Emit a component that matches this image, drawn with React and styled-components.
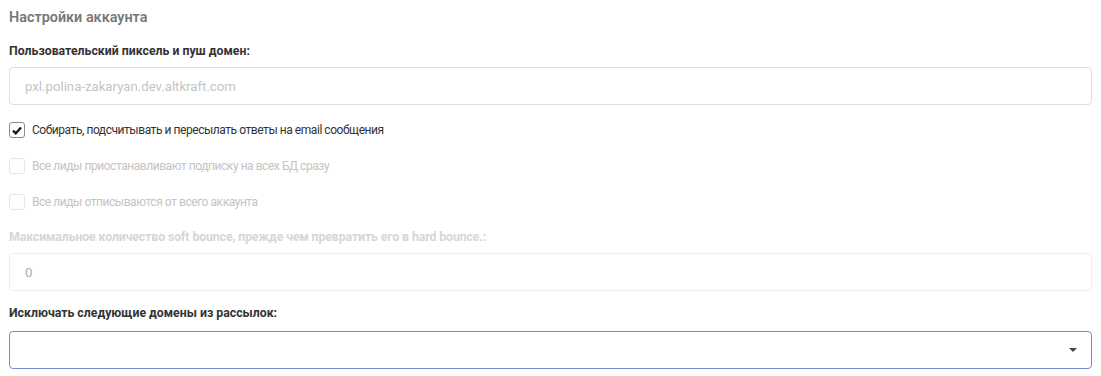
import React from "react";
import styled, { createGlobalStyle } from "styled-components";

const GlobalStyle = createGlobalStyle`
  body {
    margin: 0;
    background: #fff;
    font-family: Roboto, "Noto Sans", sans-serif;
    color: #333;
  }
`;

const Page = styled.section`
  display: flex;
  flex-direction: column;
  padding: 8px 9px 0 9px;
`;

const Title = styled.h2`
  margin: 0 0 14px 0;
  font-size: 14.4px;
  line-height: 20px;
  font-weight: 600;
  color: #777;
`;

const Label = styled.div`
  font-size: 12.3px;
  line-height: 18px;
  font-weight: 700;
  letter-spacing: ${(p) => (p.disabled ? "-0.1px" : "0")};
  color: ${(p) => (p.disabled ? "#d6d6d6" : "#333")};
  margin-bottom: ${(p) => p.space || 7}px;
`;

const Field = styled.div`
  display: flex;
  align-items: center;
  height: 38px;
  box-sizing: border-box;
  padding: 0 14px 0 15px;
  border: 1px solid ${(p) => (p.focused ? "#7b8ad6" : p.disabled ? "#eeeeee" : "#e0e0e0")};
  border-radius: 4px;
  font-size: 13.2px;
  color: ${(p) => (p.disabled ? "#aaaaaa" : "#c4c4c4")};
  margin-bottom: ${(p) => p.gap || 0}px;
`;

const Arrow = styled.span`
  margin-left: auto;
  width: 0;
  height: 0;
  border-left: 4px solid transparent;
  border-right: 4px solid transparent;
  border-top: 4px solid #444;
`;

const CheckRow = styled.label`
  display: flex;
  align-items: center;
  gap: 7px;
  height: 18px;
  margin-bottom: ${(p) => p.gap || 18}px;
  font-size: 12px;
  letter-spacing: -0.45px;
  color: ${(p) => (p.disabled ? "#c4c4c4" : "#333")};
`;

const Box = styled.span`
  display: flex;
  align-items: center;
  justify-content: center;
  width: 16px;
  height: 16px;
  box-sizing: border-box;
  border: 1px solid ${(p) => (p.checked ? "#8a8a8a" : "#e6e6e6")};
  border-radius: 3px;
`;

const Check = () => (
  <svg width="10" height="9" viewBox="0 0 10 9">
    <path d="M1 4.6 L3.8 7.3 L9 1.6" fill="none" stroke="#111" strokeWidth="2.2" />
  </svg>
);

const Option = ({ checked, disabled, gap, children }) => (
  <CheckRow disabled={disabled} gap={gap}>
    <Box checked={checked}>{checked && <Check />}</Box>
    {children}
  </CheckRow>
);

export default function App() {
  return (
    <>
      <GlobalStyle />
      <Page>
        <Title>Настройки аккаунта</Title>
        <Label>Пользовательский пиксель и пуш домен:</Label>
        <Field gap={16}>pxl.polina-zakaryan.dev.altkraft.com</Field>
        <Option checked>Собирать, подсчитывать и пересылать ответы на email сообщения</Option>
        <Option disabled>Все лиды приостанавливают подписку на всех БД сразу</Option>
        <Option disabled gap={17}>Все лиды отписываются от всего аккаунта</Option>
        <Label disabled>Максимальное количество soft bounce, прежде чем превратить его в hard bounce.:</Label>
        <Field disabled gap={13}>0</Field>
        <Label space={9}>Исключать следующие домены из рассылок:</Label>
        <Field focused>
          <Arrow />
        </Field>
      </Page>
    </>
  );
}
